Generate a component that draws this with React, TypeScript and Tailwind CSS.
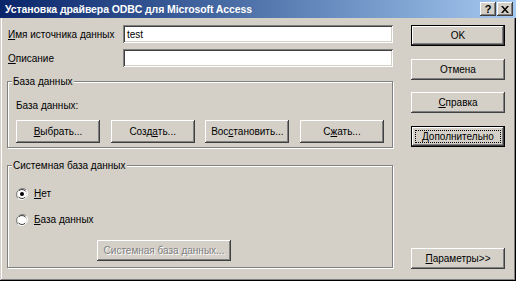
import type { ReactNode } from 'react';

const raised =
  'shadow-[inset_-1px_-1px_0_#404040,inset_1px_1px_0_#ffffff,inset_-2px_-2px_0_#808080,inset_2px_2px_0_#d4d0c8]';
const sunken =
  'shadow-[inset_1px_1px_0_#808080,inset_-1px_-1px_0_#ffffff,inset_2px_2px_0_#404040,inset_-2px_-2px_0_#d4d0c8]';

function Button({
  children,
  className = '',
  isDefault = false,
  focused = false,
  disabled = false,
}: {
  children: ReactNode;
  className?: string;
  isDefault?: boolean;
  focused?: boolean;
  disabled?: boolean;
}) {
  return (
    <div
      className={`flex items-stretch bg-[#d4d0c8] ${isDefault ? 'border border-black' : ''} ${className}`}
    >
      <div className={`flex flex-1 items-stretch ${raised}`}>
        <span
          className={`flex flex-1 items-center justify-center whitespace-nowrap ${
            focused ? 'm-[3px] border border-dotted border-black' : ''
          } ${disabled ? 'text-[#808080] [text-shadow:1px_1px_0_#ffffff]' : ''}`}
        >
          {children}
        </span>
      </div>
    </div>
  );
}

function Field({ label, value }: { label: ReactNode; value?: string }) {
  return (
    <div className="flex h-[18px] items-center">
      <span className="w-[116px] whitespace-nowrap pl-px">{label}</span>
      <div className={`flex h-full flex-1 items-center bg-white pl-[4px] ${sunken}`}>{value}</div>
    </div>
  );
}

function Group({ title, className, children }: { title: string; className: string; children: ReactNode }) {
  return (
    <div
      className={`relative border border-[#808080] shadow-[inset_1px_1px_0_#ffffff,1px_1px_0_#ffffff] ${className}`}
    >
      <span className="absolute -top-[7px] left-[4px] whitespace-nowrap bg-[#d4d0c8] px-px">{title}</span>
      {children}
    </div>
  );
}

function Radio({ checked, children }: { checked?: boolean; children: ReactNode }) {
  return (
    <div className="flex items-center">
      <svg width="12" height="12" viewBox="0 0 12 12" className="ml-[8px]">
        <path d="M10.2 1.8 A6 6 0 0 0 1.8 10.2" fill="none" stroke="#808080" strokeWidth="1" />
        <path d="M1.8 10.2 A6 6 0 0 0 10.2 1.8" fill="none" stroke="#ffffff" strokeWidth="1" />
        <circle cx="6" cy="6" r="4.5" fill="#ffffff" stroke="#404040" strokeWidth="1" strokeDasharray="7 7" strokeDashoffset="-3.5" />
        {checked && <circle cx="6" cy="6" r="2" fill="#000000" />}
      </svg>
      <span className="ml-[6px]">{children}</span>
    </div>
  );
}

function TitleBar() {
  return (
    <div className="flex h-[18px] items-center bg-gradient-to-r from-[#0a246a] to-[#a6caf0] pl-[5px] pr-[3px]">
      <span className="flex-1 whitespace-nowrap text-[10.5px] font-bold tracking-[-0.1px] text-white">
        Установка драйвера ODBC для Microsoft Access
      </span>
      <div className={`flex h-[14px] w-[16px] items-center justify-center bg-[#d4d0c8] text-[11px] font-bold ${raised}`}>
        ?
      </div>
      <div className={`ml-px flex h-[14px] w-[16px] items-center justify-center bg-[#d4d0c8] ${raised}`}>
        <svg width="8" height="7" viewBox="0 0 8 7">
          <path d="M0 0h2l2 2.5L6 0h2L5 3.5 8 7H6L4 4.5 2 7H0l3-3.5z" fill="#000000" />
        </svg>
      </div>
    </div>
  );
}

export default function App() {
  return (
    <div className="flex h-[281px] w-[516px] flex-col bg-[#d4d0c8] font-['Liberation_Sans',Arial,sans-serif] text-[10px] leading-[13px] text-black shadow-[inset_-1px_-1px_0_#000000,inset_1px_0_0_#d4d0c8,inset_-2px_-2px_0_#808080,inset_2px_0_0_#ffffff]">
      <TitleBar />
      <div className="flex flex-1 gap-[18px] pl-[7px] pt-[7px]">
        <div className="flex w-[386px] flex-col">
          <Field label={<><u>И</u>мя источника данных</>} value="test" />
          <div className="mt-[6px]">
            <Field label={<><u>О</u>писание</>} />
          </div>

          <Group title="База данных" className="mt-[14px] h-[67px] px-[8px] pt-[17px]">
            <div>База данных:</div>
            <div className="mt-[8px] flex justify-between">
              <Button className="h-[23px] w-[84px]"><u>В</u>ыбрать...</Button>
              <Button className="h-[23px] w-[84px]">Созд<u>а</u>ть...</Button>
              <Button className="h-[23px] w-[84px]">Вос<u>с</u>тановить...</Button>
              <Button className="h-[23px] w-[84px]">С<u>ж</u>ать...</Button>
            </div>
          </Group>

          <Group title="Системная база данных" className="mt-[17px] h-[103px] pt-[21px]">
            <Radio checked><u>Н</u>ет</Radio>
            <div className="mt-[13px]">
              <Radio><u>Б</u>аза данных</Radio>
            </div>
            <Button disabled className="ml-[89px] mt-[14px] h-[21px] w-[134px]">
              Системная база данных...
            </Button>
          </Group>
        </div>

        <div className="flex w-[94px] flex-col">
          <Button isDefault className="h-[21px]">OK</Button>
          <Button className="mt-[13px] h-[21px]">Отмена</Button>
          <Button className="mt-[12px] h-[21px]"><u>С</u>правка</Button>
          <Button isDefault focused className="mt-[13px] h-[21px]"><u>Д</u>ополнительно</Button>
          <Button className="mt-[101px] h-[21px]"><u>П</u>араметры&gt;&gt;</Button>
        </div>
      </div>
    </div>
  );
}
